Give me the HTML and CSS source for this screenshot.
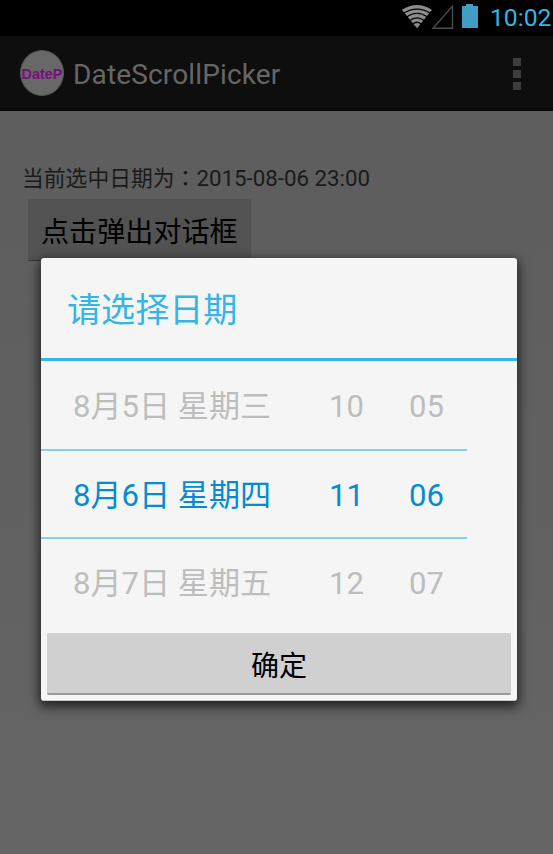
FILE: index.html
```html
<!DOCTYPE html>
<html lang="zh-CN">
<head>
<meta charset="utf-8">
<title>DateScrollPicker</title>
<link rel="stylesheet" href="styles.css">
</head>
<body>
<div class="screen">
  <header class="status-bar">
    <svg class="signals" width="78" height="36" viewBox="0 0 78 36">
      <path d="M17 28.3 L1.8 9.8 Q17 0 32 9.8 Z" fill="#8c8c8c"/>
      <g fill="none" stroke="#000" stroke-width="1.2">
        <path d="M3.5 13.3 Q17 5 30.5 13.3"/>
        <path d="M6.5 17 Q17 9.5 27.5 17"/>
        <path d="M9.5 20.8 Q17 14.8 24.5 20.8"/>
        <path d="M12.5 24.3 Q17 20.2 21.5 24.3"/>
      </g>
      <path d="M33 28.3 H52.5 V6 Z" fill="none" stroke="#4d4d4d" stroke-width="1.4"/>
      <path d="M62 6 H66 V4 H73 V6 H78 V28 H62 Z" fill="#429dc5"/>
    </svg>
    <span class="clock">10:02</span>
  </header>
  <div class="action-bar">
    <div class="app-icon"><span>DateP</span></div>
    <h1 class="app-title">DateScrollPicker</h1>
    <div class="overflow"><i></i><i></i><i></i></div>
  </div>
  <main class="content">
    <p class="selected">当前选中日期为<span class="colon" lang="zh-TW">：</span><span class="stamp">2015-08-06 23:00</span></p>
    <div class="open-button">点击弹出对话框</div>
  </main>
  <section class="dialog">
    <h2 class="dialog-title">请选择日期</h2>
    <div class="picker">
      <div class="row"><span>8月5日 星期三</span><span>10</span><span>05</span></div>
      <div class="row current"><span>8月6日 星期四</span><span>11</span><span>06</span></div>
      <div class="row"><span>8月7日 星期五</span><span>12</span><span>07</span></div>
    </div>
    <div class="confirm">确定</div>
  </section>
</div>
</body>
</html>
```
FILE: styles.css
```css
* { box-sizing: border-box; }
body { margin: 0; }
.screen {
  position: relative;
  width: 553px;
  height: 854px;
  overflow: hidden;
  background: #616161;
  font-family: Roboto, "Noto Sans CJK SC", sans-serif;
}
.status-bar {
  display: flex;
  justify-content: flex-end;
  height: 36px;
  padding-right: 1px;
  background: #000;
}
.signals { margin-right: 12px; }
.clock {
  width: 62px;
  font-size: 24.7px;
  line-height: 35px;
  color: #33b5e5;
}
.action-bar {
  display: flex;
  align-items: center;
  height: 75px;
  padding: 1px 32px 0 20px;
  background: #0e0e0e;
  border-bottom: 2px solid #080808;
}
.app-icon {
  width: 44px;
  height: 46px;
  border-radius: 50%;
  background: #686868;
  border: 1px solid #555;
  color: #76117c;
  font: bold 14.5px/47px "Liberation Sans", sans-serif;
  display: flex;
  justify-content: center;
}
.app-title {
  margin: 0 auto 0 9px;
  padding-top: 4px;
  font-size: 28px;
  line-height: 40px;
  font-weight: 400;
  letter-spacing: .15px;
  color: #666;
}
.overflow { display: grid; gap: 4px; padding-top: 2px; }
.overflow i { width: 8px; height: 8px; background: #3d3d3d; }
.content {
  height: 743px;
  padding: 48px 22px 0;
  background: linear-gradient(#5d5d5d, #656565);
}
.selected {
  margin: 0;
  height: 34px;
  font-size: 21.8px;
  line-height: 36px;
  color: #1a1a1a;
  white-space: nowrap;
}
.colon { font-family: "Noto Sans CJK TC", sans-serif; }
.stamp { font-size: 22.3px; }
.open-button {
  width: 223px;
  height: 62px;
  margin: 6px 0 0 6px;
  padding-left: 13px;
  border-radius: 2px;
  background: #525252;
  border-bottom: 1px solid #333;
  font-size: 28.1px;
  line-height: 67px;
  color: #000;
}
.dialog {
  position: absolute;
  left: 41px;
  top: 258px;
  width: 476px;
  height: 443px;
  border-radius: 3px;
  background: #f5f5f5;
  border-bottom: 1px solid #c8c8c8;
  box-shadow: 0 4px 11px 2px rgba(0, 0, 0, .65);
}
.dialog-title {
  height: 103px;
  margin: 0;
  padding-left: 26px;
  border-bottom: 3px solid #33b5e5;
  font-size: 34.1px;
  font-weight: 400;
  line-height: 105px;
  color: #33b5e5;
}
.picker { width: 426px; height: 265px; }
.row {
  display: grid;
  grid-template-columns: 256px 80px 1fr;
  height: 88px;
  padding-left: 32px;
  font-size: 31.1px;
  line-height: 92px;
  color: #bdbdbd;
  white-space: nowrap;
}
.row.current {
  height: 90px;
  border-top: 2px solid #87cee8;
  border-bottom: 2px solid #87cee8;
  line-height: 89px;
  color: #058bd2;
}
.row:last-child { line-height: 90px; }
.confirm {
  height: 62px;
  margin: 7px 6px 0;
  border-radius: 2px;
  background: #d0d0d0;
  border-bottom: 2px solid #999;
  font-size: 28px;
  line-height: 67px;
  text-align: center;
  color: #000;
}
```
